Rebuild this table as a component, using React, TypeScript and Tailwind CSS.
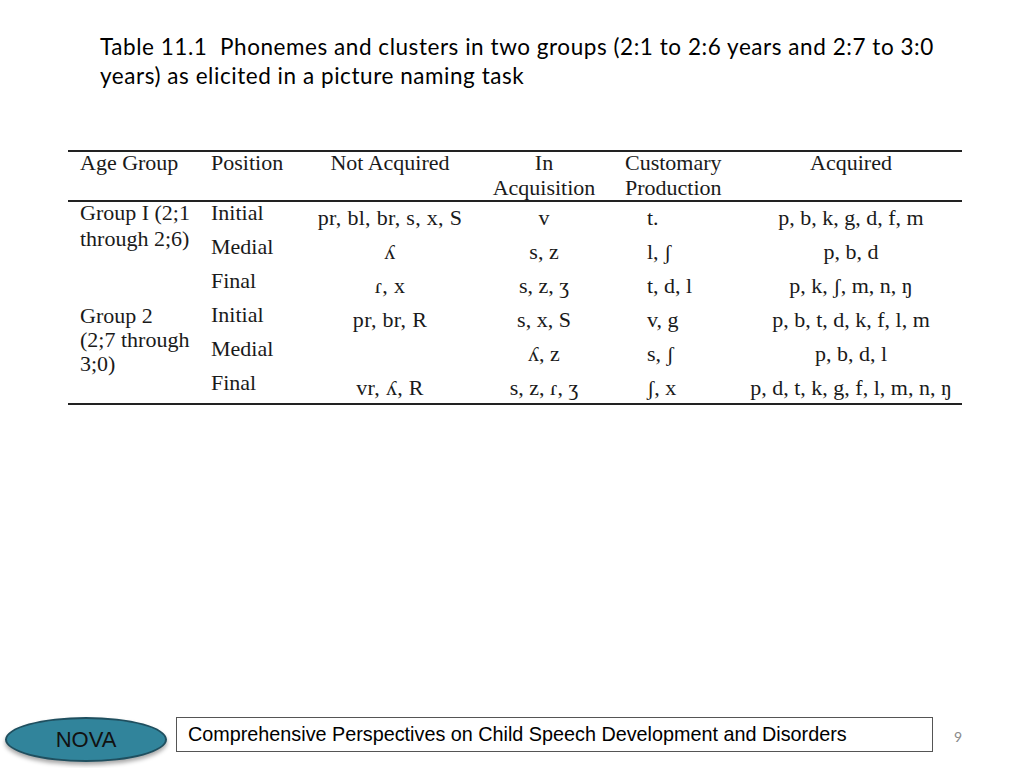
import React from 'react'

const serif = { fontFamily: '"Liberation Serif", "Times New Roman", serif' }

type Row = {
  position: string
  notAcq: string
  inAcq: string
  customary: string
  acquired: string
}

const group1: Row[] = [
  { position: 'Initial', notAcq: 'pr, bl, br, s, x, S', inAcq: 'v', customary: 't.', acquired: 'p, b, k, g, d, f, m' },
  { position: 'Medial', notAcq: 'ʎ', inAcq: 's, z', customary: 'l, ʃ', acquired: 'p, b, d' },
  { position: 'Final', notAcq: 'ɾ, x', inAcq: 's, z, ʒ', customary: 't, d, l', acquired: 'p, k, ʃ, m, n, ŋ' },
]

const group2: Row[] = [
  { position: 'Initial', notAcq: 'pr, br, R', inAcq: 's, x, S', customary: 'v, g', acquired: 'p, b, t, d, k, f, l, m' },
  { position: 'Medial', notAcq: '', inAcq: 'ʎ, z', customary: 's, ʃ', acquired: 'p, b, d, l' },
  { position: 'Final', notAcq: 'vr, ʎ, R', inAcq: 's, z, ɾ, ʒ', customary: 'ʃ, x', acquired: 'p, d, t, k, g, f, l, m, n, ŋ' },
]

function GroupRows({ label, rows, lead, last }: { label: string[]; rows: Row[]; lead: string; last?: boolean }) {
  return (
    <div className="flex">
      <div className={`w-[137px] pl-[12px] ${lead}`}>
        {label.map((l) => (
          <div key={l}>{l}</div>
        ))}
      </div>
      <div className="flex-1 flex flex-col">
        {rows.map((r, i) => (
          <div
            key={r.position}
            className={`flex leading-[22px] ${last && i === rows.length - 1 ? 'h-[31px]' : 'h-[34px]'}`}
          >
            <div className="w-[100px] pl-[6px]">{r.position}</div>
            <div className="w-[170px] text-center pt-[5px] tracking-[0.3px]">{r.notAcq}</div>
            <div className="w-[138px] text-center pt-[5px]">{r.inAcq}</div>
            <div className="w-[127px] pt-[5px] pl-[34px]">{r.customary}</div>
            <div className="flex-1 text-center pt-[5px]">{r.acquired}</div>
          </div>
        ))}
      </div>
    </div>
  )
}

export default function App() {
  return (
    <div className="w-[1024px] h-[768px] bg-white flex flex-col text-black overflow-hidden">
      {/* Title */}
      <div
        className="ml-[100px] w-[860px] pt-[32px] text-[22.5px] leading-[29px] tracking-[0.55px] text-black"
        style={{ fontFamily: 'Lato, "Open Sans", sans-serif' }}
      >
        Table 11.1&nbsp; Phonemes and clusters in two groups (2:1 to 2:6 years and 2:7 to 3:0 years) as elicited in a picture naming task
      </div>

      {/* Table */}
      <div className="ml-[68px] w-[894px] mt-[60px] text-[22px] text-[#1a1a1a]" style={serif}>
        <div className="border-t-2 border-b-2 border-[#222] flex h-[52px] leading-[25px]">
          <div className="flex w-full -mt-[2px]">
            <div className="w-[137px] pl-[12px]">Age Group</div>
            <div className="w-[100px] pl-[6px]">Position</div>
            <div className="w-[170px] text-center">Not Acquired</div>
            <div className="w-[138px] text-center">
              <div>In</div>
              <div>Acquisition</div>
            </div>
            <div className="w-[127px] pl-[12px]">
              <div>Customary</div>
              <div>Production</div>
            </div>
            <div className="flex-1 text-center">Acquired</div>
          </div>
        </div>
        <div className="border-b-2 border-[#222]">
          <GroupRows label={['Group I (2;1', 'through 2;6)']} rows={group1} lead="leading-[26px] -mt-[2px]" />
          <GroupRows label={['Group 2', '(2;7 through', '3;0)']} rows={group2} lead="leading-[24px]" last />
        </div>
      </div>

      {/* Footer */}
      <div className="mt-auto flex items-start pl-[5px] pb-[6px]" style={{ fontFamily: '"Liberation Sans", Arial, sans-serif' }}>
        <div className="w-[162px] h-[45px] rounded-[50%] bg-[#31849b] border-2 border-[#1f4f5f] shadow-[0_3px_4px_rgba(0,0,0,0.35)] flex items-center justify-center text-[22px] text-[#111]">
          NOVA
        </div>
        <div className="ml-[9px] w-[757px] h-[35px] border border-[#555] flex items-center pl-[11px] text-[19.8px] text-black">
          Comprehensive Perspectives on Child Speech Development and Disorders
        </div>
        <div
          className="ml-[21px] mt-[9px] text-[14px] text-[#8a8a8a]"
          style={{ fontFamily: 'Lato, sans-serif' }}
        >
          9
        </div>
      </div>
    </div>
  )
}
